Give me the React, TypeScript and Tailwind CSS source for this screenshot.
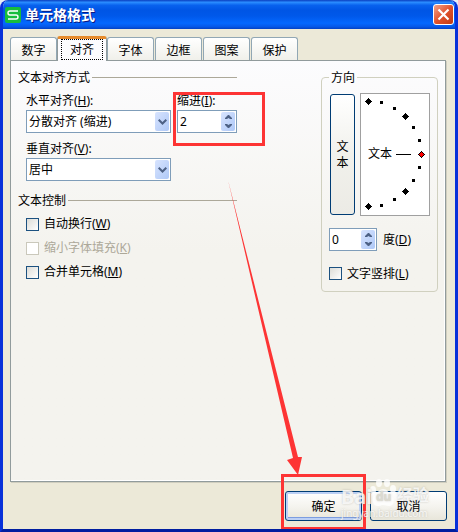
import { useState } from "react"
import type { ReactNode } from "react"

const tabs = ["数字", "对齐", "字体", "边框", "图案", "保护"]

const diamonds = [[8, 8], [45, 23], [45, 98], [8, 113]]

const dots = [[21, 9], [34, 15], [53, 34], [59, 47], [59, 74], [53, 87], [34, 106], [21, 112]]

function SectionTitle({ children }: { children: ReactNode }) {
  return (
    <div className="flex h-4 items-center gap-0.5">
      <h2 className="whitespace-nowrap pt-0.5">{children}</h2>
      <span className="h-px flex-1 bg-[#aca899]" />
    </div>
  )
}

function SelectField({ id, label, options }: { id: string; label: ReactNode; options: string[] }) {
  return (
    <div className="w-[145px]">
      <label htmlFor={id} className="block h-[18px] leading-[18px]">{label}</label>
      <div className="relative">
        <select
          id={id}
          className="block h-[23px] w-full appearance-none border border-[#7f9db9] bg-white pl-0.5 pr-5 outline-none"
        >
          {options.map((option) => <option key={option}>{option}</option>)}
        </select>
        <span className="pointer-events-none absolute inset-y-0.5 right-0.5 flex w-3.5 items-center justify-center rounded-xs bg-linear-to-br from-[#d8e4fe] to-[#aec8f7]">
          <svg width="9" height="6" viewBox="0 0 9 6" fill="none" stroke="#4d6185" strokeWidth="2">
            <path d="M0.7 0.7L4.5 4.5L8.3 0.7" />
          </svg>
        </span>
      </div>
    </div>
  )
}

function SpinBox({ id, start }: { id: string; start: number }) {
  const [value, setValue] = useState(start)

  return (
    <div className="flex h-[23px] items-center border border-[#7f9db9] bg-white p-px">
      <input
        id={id}
        value={value}
        onChange={(e) => setValue(Number(e.target.value) || 0)}
        className="w-0 min-w-0 flex-1 pl-px outline-none"
      />
      <div className="flex h-full w-3.5 flex-col rounded-xs bg-linear-to-br from-[#d8e4fe] to-[#aec8f7]">
        <button aria-label="增加" onClick={() => setValue(value + 1)} className="flex flex-1 items-center justify-center">
          <svg width="7" height="4" viewBox="0 0 7 4" fill="#4d6185">
            <path d="M3 0H4L7 3V4H5L3.5 3L2 4H0V3Z" />
          </svg>
        </button>
        <button aria-label="减少" onClick={() => setValue(value - 1)} className="flex flex-1 items-center justify-center">
          <svg width="7" height="4" viewBox="0 0 7 4" fill="#4d6185">
            <path d="M3 4H4L7 1V0H5L3.5 1L2 0H0V1Z" />
          </svg>
        </button>
      </div>
    </div>
  )
}

function CheckField({ children, disabled }: { children: ReactNode; disabled?: boolean }) {
  return (
    <label className={`flex items-center gap-[5px] whitespace-nowrap ${disabled ? "text-[#aca899]" : ""}`}>
      <input
        type="checkbox"
        disabled={disabled}
        className="size-[13px] appearance-none border border-[#1c5180] bg-linear-to-br from-[#dcdcd7] to-white checked:bg-[#21a121] disabled:border-[#cac8bb] disabled:from-white"
      />
      <span>{children}</span>
    </label>
  )
}

function AngleDial() {
  return (
    <div className="relative h-[123px] w-[70px] border border-[#a0a0a0] bg-white">
      <svg width="68" height="121" viewBox="1 1 68 121" shapeRendering="crispEdges">
        {diamonds.map(([x, y]) => (
          <path key={`${x}-${y}`} d={`M${x} ${y - 3}h1v1h1v1h1v1h1v1h-1v1h-1v1h-1v1h-1v-1h-1v-1h-1v-1h-1v-1h1v-1h1v-1h1z`} />
        ))}
        {dots.map(([x, y]) => <rect key={`${x}-${y}`} x={x - 1} y={y - 1} width="3" height="3" />)}
        <rect x="36" y="61" width="15" height="1" />
        <path d="M61 58h1v1h1v1h1v1h1v1h-1v1h-1v1h-1v1h-1v-1h-1v-1h-1v-1h-1v-1h1v-1h1v-1h1z" />
        <path d="M61 59h1v1h1v1h1v1h-1v1h-1v1h-1v-1h-1v-1h-1v-1h1v-1h1z" fill="#ff0000" />
      </svg>
      <span className="absolute left-[7px] top-[52px]">文本</span>
    </div>
  )
}

function Watermark() {
  return (
    <div className="pointer-events-none absolute right-4 -top-3 h-10 w-[90px] text-white/80 [text-shadow:0_0_2px_#8a887e80]">
      <svg className="absolute left-7 top-0" width="28" height="28" viewBox="0 0 28 28" fill="currentColor">
        <ellipse cx="4" cy="11" rx="3" ry="4" />
        <ellipse cx="10" cy="4" rx="3" ry="4" />
        <ellipse cx="18" cy="4" rx="3" ry="4" />
        <ellipse cx="24" cy="10" rx="3" ry="4" />
        <path d="M14 10C10 10 9 14 6 16C2 19 3 27 9 27C12 27 12 26 14 26C17 26 17 27 20 27C26 27 26 20 22 16C19 13 18 10 14 10Z" />
      </svg>
      <span className="absolute left-0 top-2 text-xl leading-5 font-bold">Bai</span>
      <span className="absolute left-[35px] top-3 text-xs leading-3 font-bold text-[#dcdad0]">du</span>
      <span className="absolute left-14 top-2 text-base leading-4 font-bold">经验</span>
      <span className="absolute left-0 top-7 text-[10px] leading-3">jingyan.baidu.com</span>
    </div>
  )
}

const dialogButton =
  "h-[30px] w-[77px] rounded-[3px] border border-[#003c74] bg-linear-to-b from-white via-[#f5f4ef] to-[#e8e6da] pt-0.5"

export default function App() {
  const [active, setActive] = useState("对齐")

  return (
    <div className="bg-[#e8eef5]">
      <div className="relative flex min-h-screen flex-col overflow-hidden rounded-t-lg border-x-3 border-b-3 border-[#0831d9] border-b-[#001ea0] bg-[#ece9d8] font-[family-name:'Noto_Sans','Noto_Sans_CJK_SC',sans-serif] text-xs leading-4 text-black">
        <header className="-mx-[3px] flex h-[29px] items-center gap-1 bg-[linear-gradient(#0a3fc0,#2a8cff_8%,#0862ee_18%,#0055e5_35%,#0058ea_55%,#0468ff_80%,#0558e8_92%,#0341c4)] pl-[5px] pr-1">
          <svg width="16" height="16" viewBox="0 0 16 16" fill="none">
            <rect width="16" height="16" rx="2" fill="#18bd3c" />
            <path d="M13 4H5Q3 4 3 6T5 8H11Q13 8 13 10T11 12H3" stroke="#fff" strokeWidth="1.4" />
          </svg>
          <h1 className="flex-1 pt-px text-sm font-bold text-white [text-shadow:1px_1px_#0a1883]">单元格格式</h1>
          <button
            aria-label="关闭"
            className="flex size-[21px] items-center justify-center rounded-[3px] border border-white bg-linear-to-br from-[#f0a088] via-[#e0522c] to-[#c03a10]"
          >
            <svg width="13" height="13" viewBox="0 0 13 13" stroke="#fff" strokeWidth="2.2">
              <path d="M1.5 1.5L11.5 11.5M11.5 1.5L1.5 11.5" />
            </svg>
          </button>
        </header>

        <main className="flex flex-1 flex-col pt-[7px] pr-[9px] pb-2 pl-[7px]">
          <div role="tablist" className="z-10 flex h-6 items-end gap-px">
            {tabs.map((tab) =>
              tab === active ? (
                <button
                  key={tab}
                  role="tab"
                  aria-selected
                  className="-mx-px -mb-px h-[25px] w-[50px] self-start rounded-t-[3px] border-x border-t-3 border-x-[#919b9c] border-t-[#e68b2c] bg-[#fcfcfe] px-[3px] pb-px"
                >
                  <span className="flex h-[21px] items-center justify-center border border-dotted border-black">{tab}</span>
                </button>
              ) : (
                <button
                  key={tab}
                  role="tab"
                  aria-selected={false}
                  onClick={() => setActive(tab)}
                  className="h-[23px] w-[47px] rounded-t-[3px] border border-b-0 border-[#91a7b4] bg-linear-to-b from-white to-[#f0f0ea] pt-1"
                >
                  {tab}
                </button>
              )
            )}
          </div>

          <div
            role="tabpanel"
            className="flex flex-1 items-start justify-between border border-[#919b9c] bg-linear-to-b from-[#fcfcfe] to-[#f4f3ee] to-45% px-[7px] pt-2 shadow-[1px_1px_#d0cebf,inset_-1px_-1px_#fff]"
          >
            <div className="w-[219px]">
              <SectionTitle>文本对齐方式</SectionTitle>
              <div className="mt-[7px] flex gap-1.5 pl-2">
                <SelectField
                  id="horizontal"
                  label={<>水平对齐(<u>H</u>):</>}
                  options={["分散对齐 (缩进)", "常规", "靠左 (缩进)", "居中", "靠右 (缩进)"]}
                />
                <div className="relative w-[60px]">
                  <label htmlFor="indent" className="block h-[18px] leading-[18px]">缩进(<u>I</u>):</label>
                  <SpinBox id="indent" start={2} />
                  <span className="pointer-events-none absolute -left-1 top-0 h-[54px] w-[92px] border-3 border-[#fd3434]" />
                </div>
              </div>
              <div className="mt-[7px] mb-[11px] pl-2">
                <SelectField id="vertical" label={<>垂直对齐(<u>V</u>):</>} options={["居中", "靠上", "靠下"]} />
              </div>
              <SectionTitle>文本控制</SectionTitle>
              <div className="mt-1 pl-2 leading-6">
                <CheckField>自动换行(<u>W</u>)</CheckField>
                <CheckField disabled>缩小字体填充(<u>K</u>)</CheckField>
                <CheckField>合并单元格(<u>M</u>)</CheckField>
              </div>
            </div>

            <fieldset className="w-[117px] rounded border border-[#d0d0bf] px-[7px] pb-[11px]">
              <legend className="h-4 px-0.5 leading-[18px]">方向</legend>
              <div className="flex items-center justify-between pt-2">
                <button className="ml-px flex h-[121px] w-[25px] flex-col items-center justify-center rounded-[3px] border border-[#003c74] bg-linear-to-b from-white via-[#f1f1ec] to-[#ecebe5]">
                  <span>文</span>
                  <span>本</span>
                </button>
                <AngleDial />
              </div>
              <div className="mt-3 mb-4 flex items-center gap-1.5">
                <div className="w-12">
                  <SpinBox id="degrees" start={0} />
                </div>
                <label htmlFor="degrees">度(<u>D</u>)</label>
              </div>
              <div className="leading-[13px]">
                <CheckField>文字竖排(<u>L</u>)</CheckField>
              </div>
            </fieldset>
          </div>

          <div className="relative mt-[9px] -mr-px flex justify-end gap-2">
            <div className="relative">
              <button className={`${dialogButton} shadow-[inset_0_0_0_2px_#bcd0f5,inset_0_-3px_#7c9de0]`}>确定</button>
              <span className="pointer-events-none absolute -left-1 -top-[17px] h-14 w-[85px] border-3 border-[#fd3434]" />
              <svg
                className="pointer-events-none absolute -top-[311px] -left-[57px]"
                width="76"
                height="296"
                viewBox="0 0 76 296"
                fill="#fd3434"
              >
                <path d="M0 0L65 278L59 280L70 295L74 277L70 277Z" />
              </svg>
            </div>
            <button className={dialogButton}>
              <span className="relative z-10">取消</span>
            </button>
            <Watermark />
          </div>
        </main>
      </div>
    </div>
  )
}
